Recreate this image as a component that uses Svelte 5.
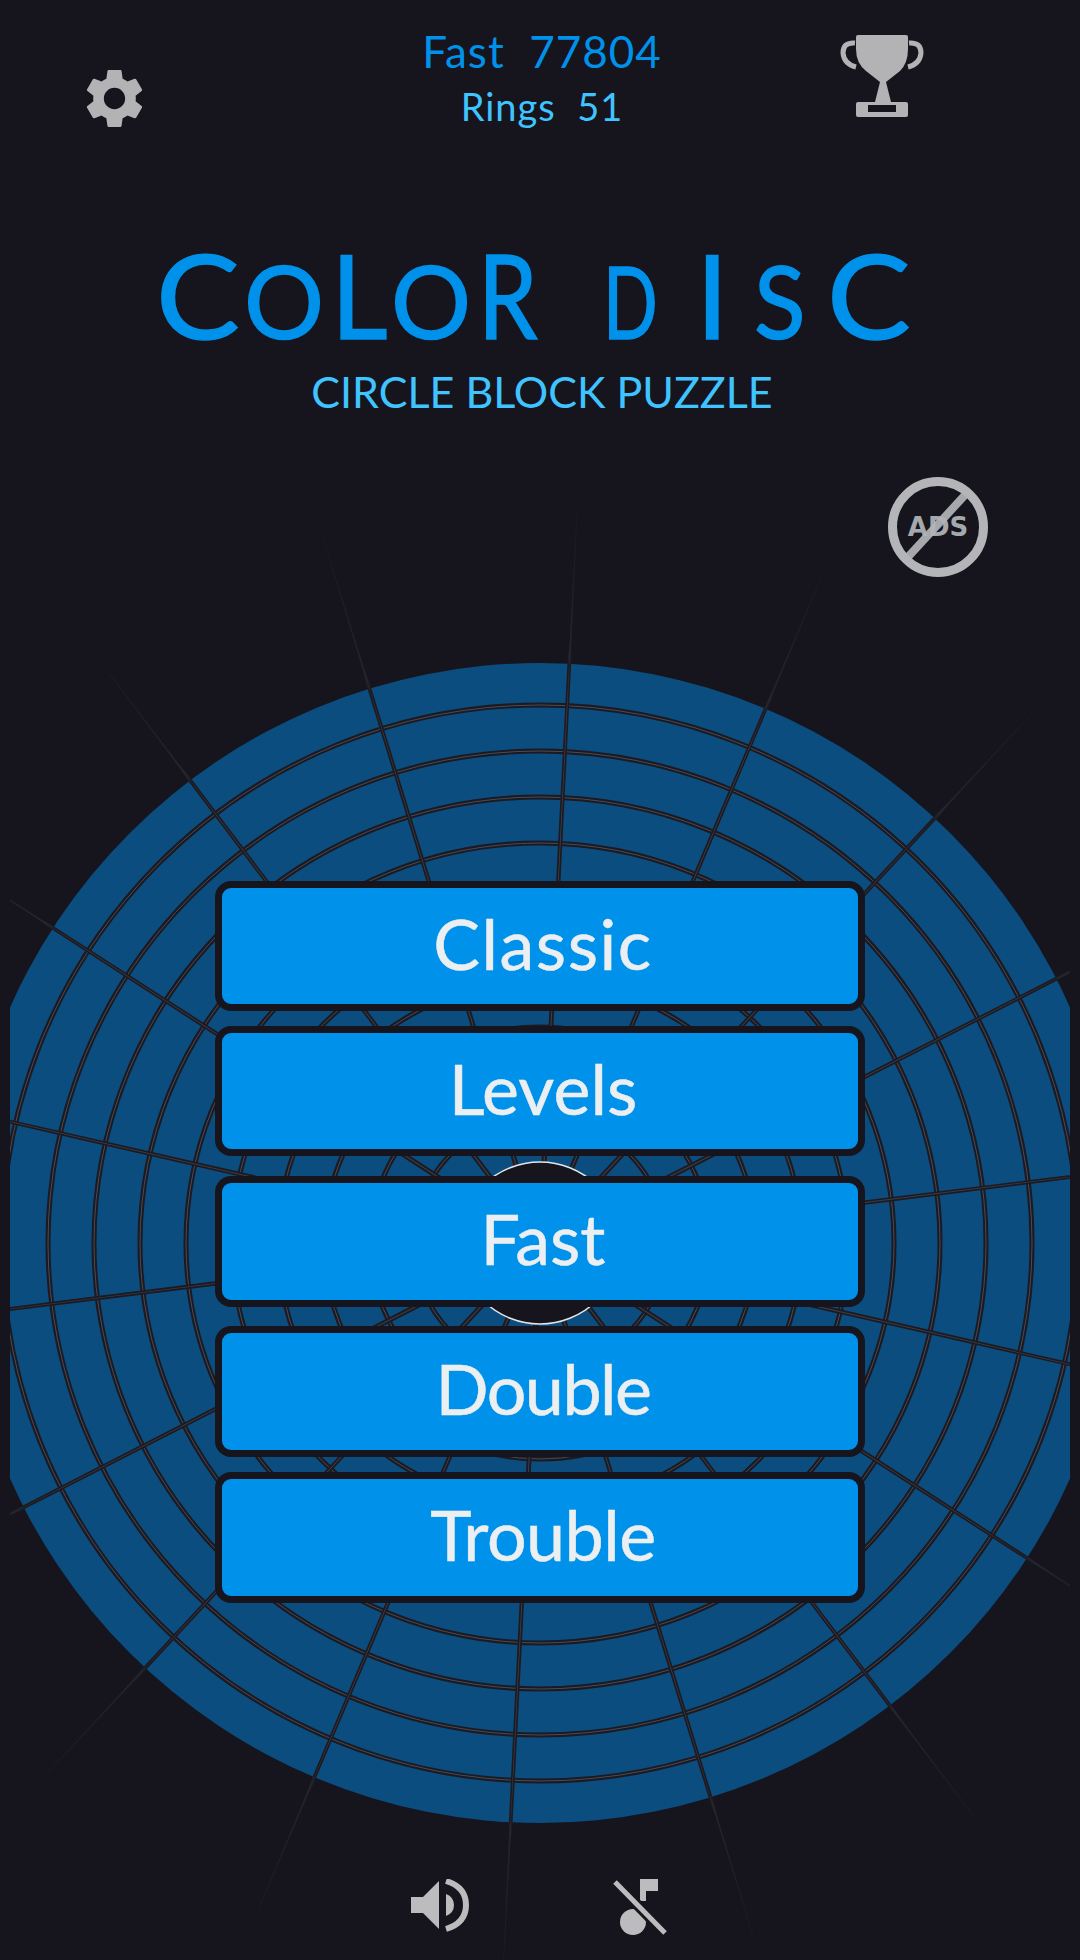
<script lang="ts">
    const cx = 540;
    const cy = 1243;
    const rings = [538, 492, 446, 400, 354, 308, 262, 216, 170, 126];
    const modes = [
        { label: "Classic", gap: 0, tall: false, track: 1.5 },
        { label: "Levels", gap: 15, tall: false, track: 0 },
        { label: "Fast", gap: 20, tall: true, track: 0 },
        { label: "Double", gap: 19, tall: true, track: -1.5 },
        { label: "Trouble", gap: 15, tall: true, track: -0.5 },
    ];
    // the logo spacing is uneven, so every letter carries its own advance and squeeze
    const titleLetters = [
        { ch: "C", big: true, w: 88, sx: 1.08 },
        { ch: "O", big: false, w: 87, sx: 1 },
        { ch: "L", big: true, w: 60, sx: 0.95 },
        { ch: "O", big: false, w: 87, sx: 1 },
        { ch: "R", big: true, w: 125, sx: 0.82 },
        { ch: "D", big: false, w: 93, sx: 0.72 },
        { ch: "I", big: true, w: 58, sx: 1 },
        { ch: "S", big: false, w: 73, sx: 0.95 },
        { ch: "C", big: true, w: 88, sx: 1.08 },
    ];

    // tapered spoke: holds its width across the disc, then thins out past the edge
    function spoke(deg: number, inner: number, edge: number, from = 81, to = 760) {
        const a = (deg * Math.PI) / 180;
        const ux = Math.sin(a);
        const uy = -Math.cos(a);
        const pt = (r: number, w: number) =>
            `${(cx + ux * r - uy * w).toFixed(1)},${(cy + uy * r + ux * w).toFixed(1)}`;
        return `M${pt(from, inner)}L${pt(580, edge)}L${pt(600, 0.7)}L${pt(to, 0.2)}L${pt(to, -0.2)}L${pt(600, -0.7)}L${pt(580, -edge)}L${pt(from, -inner)}Z`;
    }

    const angles = Array.from({ length: 18 }, (_, i) => 2.9 + i * 20);
    const spokesDark = angles.map((a) => spoke(a, 2.6, 1.9)).join("");
    const spokesLight = angles.map((a) => spoke(a, 0.6, 0.3)).join("");
</script>

<div class="page">
    <svg class="disc" viewBox="0 0 1080 1960" width="1080" height="1960">
        <defs>
            <clipPath id="field"><rect x="10" y="0" width="1060" height="1960" /></clipPath>
            <radialGradient id="fadeDark" gradientUnits="userSpaceOnUse" cx={cx} cy={cy} r="760">
                <stop offset="0.76" stop-color="#1b1a23" />
                <stop offset="0.78" stop-color="#24242c" />
                <stop offset="1" stop-color="#16151e" />
            </radialGradient>
            <radialGradient id="fadeLight" gradientUnits="userSpaceOnUse" cx={cx} cy={cy} r="760">
                <stop offset="0.7" stop-color="#3c3c44" />
                <stop offset="0.78" stop-color="#24242c" />
                <stop offset="1" stop-color="#16151e" />
            </radialGradient>
        </defs>
        <g clip-path="url(#field)">
            <circle cx={cx} cy={cy} r="580" fill="#0b4d7e" />
            {#each rings as r}
                <circle cx={cx} cy={cy} {r} fill="none" stroke="#1b1a23" stroke-width="5" />
                <circle cx={cx} cy={cy} {r} fill="none" stroke="#4a4a52" stroke-width="1" />
            {/each}
            <path d={spokesDark} fill="url(#fadeDark)" />
            <path d={spokesLight} fill="url(#fadeLight)" />
            <circle cx={cx} cy={cy} r="81" fill="#16151e" stroke="#e4e6e8" stroke-width="1.5" />
        </g>
    </svg>

    <header class="top">
        <svg class="gear" viewBox="0 0 24 24" width="71" height="71">
            <path fill="#b3b3b5" d="M19.14,12.94c0.04-0.3,0.06-0.61,0.06-0.94c0-0.32-0.02-0.64-0.07-0.94l2.03-1.58c0.18-0.14,0.23-0.41,0.12-0.61l-1.92-3.32c-0.12-0.22-0.37-0.29-0.59-0.22l-2.39,0.96c-0.5-0.38-1.03-0.7-1.62-0.94L14.4,2.81c-0.04-0.24-0.24-0.41-0.48-0.41h-3.84c-0.24,0-0.43,0.17-0.47,0.41L9.25,5.35C8.66,5.59,8.12,5.92,7.63,6.29L5.24,5.33c-0.22-0.08-0.47,0-0.59,0.22L2.74,8.87C2.62,9.08,2.66,9.34,2.86,9.48l2.03,1.58C4.84,11.36,4.8,11.69,4.8,12s0.02,0.64,0.07,0.94l-2.03,1.58c-0.18,0.14-0.23,0.41-0.12,0.61l1.92,3.32c0.12,0.22,0.37,0.29,0.59,0.22l2.39-0.96c0.5,0.38,1.03,0.7,1.62,0.94l0.36,2.54c0.05,0.24,0.24,0.41,0.48,0.41h3.84c0.24,0,0.44-0.17,0.47-0.41l0.36-2.54c0.59-0.24,1.13-0.56,1.62-0.94l2.39,0.96c0.22,0.08,0.47,0,0.59-0.22l1.92-3.32c0.12-0.22,0.07-0.47-0.12-0.61L19.14,12.94z M12,15.6c-1.98,0-3.6-1.62-3.6-3.6s1.62-3.6,3.6-3.6s3.6,1.62,3.6,3.6S13.98,15.6,12,15.6z" />
        </svg>
        <div class="scores">
            <div class="best">Fast&nbsp;&nbsp;77804</div>
            <div class="rings">Rings&nbsp;&nbsp;51</div>
        </div>
        <svg class="trophy" viewBox="0 0 84 84" width="84" height="84">
            <path fill="none" stroke="#b3b3b5" stroke-width="5" d="M15 8q-12-1-12 10 1 11 13 14M69 8q12-1 12 10-1 11-13 14" />
            <path fill="#b3b3b5" d="M16 2q0-2 2-2h48q2 0 2 2v12q0 14-8 22l-14 11 5 20h-16l5-20-14-11q-10-8-10-22z" />
            <path fill="#b3b3b5" fill-rule="evenodd" d="M16 69q0-2 2-2h48q2 0 2 2v11q0 2-2 2h-48q-2 0-2-2zM28 70v7h28v-7z" />
        </svg>
    </header>

    <div class="brand">
        <h1 class="title">
            {#each titleLetters as letter}
                <span class:big={letter.big} style="width: {letter.w}px; transform: scaleX({letter.sx})">{letter.ch}</span>
            {/each}
        </h1>
        <div class="subtitle">CIRCLE BLOCK PUZZLE</div>
    </div>

    <div class="ads-row">
        <svg viewBox="0 0 100 100" width="100" height="100">
            <text x="50" y="59" text-anchor="middle" class="ads">ADS</text>
            <circle cx="50" cy="50" r="45.5" fill="none" stroke="#b3b5b8" stroke-width="9" />
            <path d="M20 80L77 18" stroke="#b3b5b8" stroke-width="8" opacity="0.92" />
        </svg>
    </div>

    <nav class="menu">
        {#each modes as mode}
            <button class:tall={mode.tall} style="margin-top: {mode.gap}px; letter-spacing: {mode.track}px">{mode.label}</button>
        {/each}
    </nav>

    <footer class="sound">
        <svg viewBox="0 0 60 60" width="60" height="60">
            <path fill="#bcbcbe" d="M1 18h12l16-16v48l-16-16h-12z" />
            <path fill="#bcbcbe" d="M36 15q8 3 8 11t-8 11z" />
            <path fill="none" stroke="#bcbcbe" stroke-width="6" d="M36 2q20 6 20 24t-20 24" />
        </svg>
        <svg viewBox="0 0 60 60" width="60" height="60">
            <path fill="#bcbcbe" d="M27 0h18v12h-12v10h-6z" />
            <circle cx="20" cy="43" r="13" fill="#bcbcbe" />
            <path stroke="#16151e" stroke-width="11" d="M3 4L53 55" />
            <path stroke="#bcbcbe" stroke-width="5" d="M2 3L52 54" />
        </svg>
    </footer>
</div>

<style>
    :global(body) {
        background: #16151e;
    }

    .page {
        position: relative;
        width: 1080px;
        height: 1960px;
        overflow: hidden;
        background: #16151e;
        font-family: Lato, "Open Sans", sans-serif;
    }

    .disc {
        position: absolute;
        inset: 0;
    }

    .top,
    .brand,
    .ads-row {
        position: relative;
    }

    .top {
        height: 135px;
        display: flex;
        align-items: flex-start;
        padding: 0 156px 0 79px;
    }

    .gear {
        margin-top: 63px;
    }

    .scores {
        width: 400px;
        margin: 24px 0 0 192px;
        text-align: center;
    }

    .best {
        color: #0091ea;
        font-size: 44px;
        line-height: 54px;
        letter-spacing: 1px;
    }

    .rings {
        color: #40c4ff;
        font-size: 38px;
        line-height: 57px;
        letter-spacing: 1px;
    }

    .trophy {
        margin: 35px 0 0 auto;
    }

    .brand {
        height: 335px;
        text-align: center;
        padding-top: 100px;
        box-sizing: border-box;
    }

    .title {
        margin: 0;
        padding-left: 156px;
        display: flex;
        align-items: baseline;
        color: #0091ea;
        font-size: 100px;
        font-weight: 400;
        line-height: 120px;
        text-align: left;
        -webkit-text-stroke: 1.5px #0091ea;
    }

    .title span {
        flex: none;
        transform-origin: left center;
    }

    .title .big {
        font-size: 116px;
    }

    .subtitle {
        color: #40c4ff;
        font-size: 43px;
        line-height: 50px;
        margin-top: 7px;
        padding-left: 4px;
    }

    .ads-row {
        height: 0;
        display: flex;
        justify-content: flex-end;
        padding-right: 92px;
    }

    .ads-row svg {
        margin-top: 7px;
        height: 100px;
    }

    .ads {
        font-family: "DejaVu Sans", sans-serif;
        font-weight: 700;
        font-size: 26px;
        fill: #a4a9ad;
    }

    .menu {
        position: absolute;
        top: 881px;
        left: 215px;
        display: flex;
        flex-direction: column;
    }

    button {
        box-sizing: border-box;
        width: 650px;
        height: 130px;
        padding: 0 0 7px 6px;
        border: 7px solid #16151e;
        border-radius: 16px;
        background: #0091ea;
        color: #eceff1;
        font-family: inherit;
        font-size: 70px;
        line-height: 1;
        -webkit-text-stroke: 0.5px #eceff1;

        &.tall {
            height: 131px;
        }
    }

    .sound {
        position: absolute;
        top: 1879px;
        left: 410px;
        display: flex;
        gap: 143px;
    }
</style>
